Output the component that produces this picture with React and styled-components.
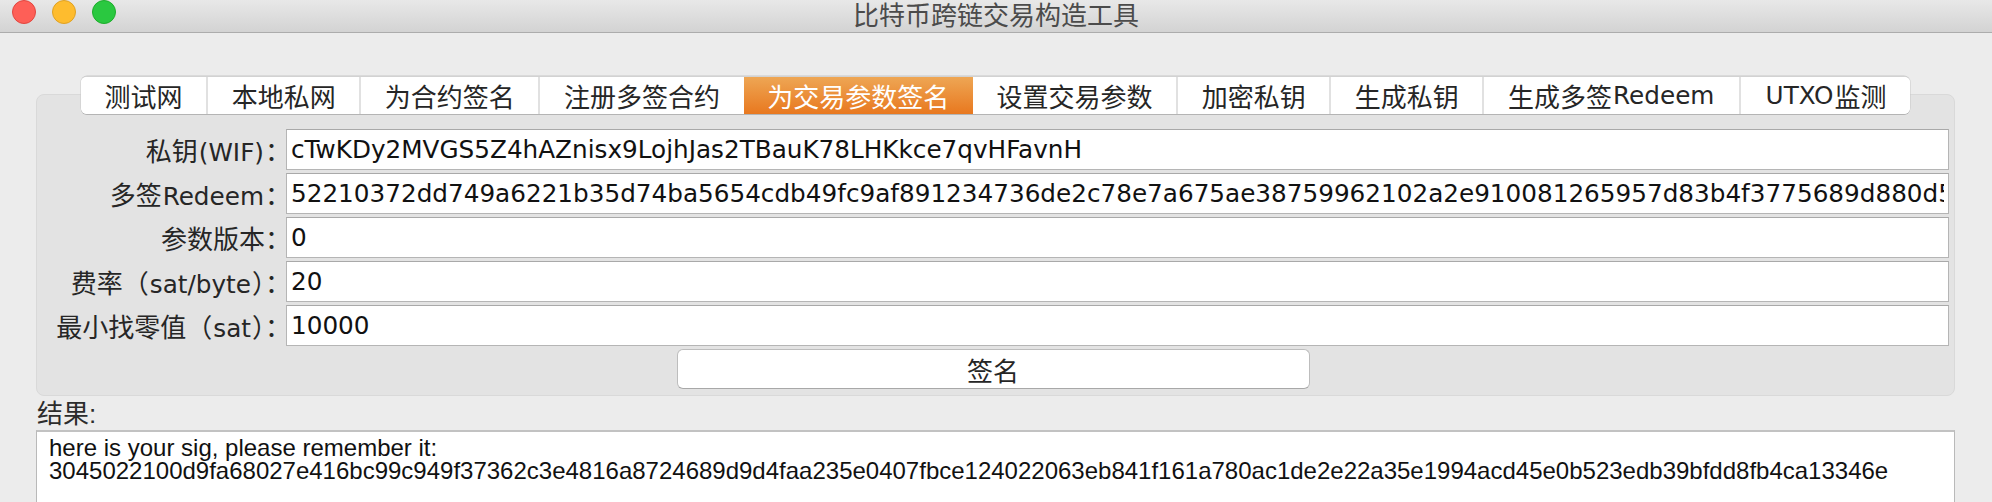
import React from 'react';
import styled, { createGlobalStyle } from 'styled-components';

const GlobalStyle = createGlobalStyle`
  html, body {
    margin: 0;
    padding: 0;
    background: #ececec;
    font-family: "Liberation Sans", "Noto Sans CJK SC", sans-serif;
  }
  * { box-sizing: border-box; }
`;

const Window = styled.div`
  width: 1992px;
  height: 502px;
  overflow: hidden;
  background: #ececec;
  display: flex;
  flex-direction: column;
`;

const TitleBar = styled.div`
  height: 33px;
  flex: none;
  display: grid;
  grid-template-columns: 1fr auto 1fr;
  align-items: start;
  background: linear-gradient(#e8e8e8, #d3d3d3);
  border-bottom: 1px solid #acacac;
`;

const Lights = styled.div`
  display: flex;
  gap: 16px;
  padding-left: 12px;
`;

const Light = styled.span`
  width: 24px;
  height: 24px;
  border-radius: 50%;
  background: ${p => p.$color};
  border: 1px solid ${p => p.$edge};
`;

const Title = styled.div`
  font-size: 26px;
  line-height: 27px;
  color: #4b4b4b;
  font-family: "Noto Sans CJK SC", sans-serif;
`;

const Content = styled.div`
  padding: 43px 37px 0 36px;
  display: flex;
  flex-direction: column;
`;

const TabRow = styled.div`
  display: flex;
  justify-content: center;
  position: relative;
  z-index: 1;
`;

const TabStrip = styled.div`
  display: flex;
  height: 38px;
  background: #fff;
  border-radius: 6px;
  border-top: 1px solid #d2d2d2;
  box-shadow: 0 1px 0 #b4b4b4, 0 0 0 0.5px #c8c8c8;
  overflow: hidden;
`;

const Tab = styled.div`
  display: flex;
  align-items: center;
  justify-content: center;
  padding: 0 23.6px;
  font-family: "Noto Sans CJK SC", sans-serif;
  font-size: 26px;
  color: ${p => (p.$active ? '#ffffff' : '#262626')};
  background: ${p => (p.$active ? 'linear-gradient(#eea654, #e8781f)' : '#ffffff')};
  border-left: ${p => (p.$first || p.$active || p.$afterActive ? 'none' : '2px solid #e1e1e1')};
  white-space: nowrap;
`;

const Latin = styled.span`
  font-family: "DejaVu Sans", sans-serif;
  font-size: 0.95em;
  margin: 0 1px;
`;

const Panel = styled.div`
  margin-top: -20px;
  background: #e3e3e3;
  border: 1px solid #d9d9d9;
  border-radius: 8px;
  padding: 34px 5px 6px 0;
  display: flex;
  flex-direction: column;
`;

const Form = styled.div`
  display: grid;
  grid-template-columns: 249px 1fr;
  row-gap: 3px;
`;

const Label = styled.label`
  font-family: "Noto Sans CJK SC", sans-serif;
  font-size: 26px;
  color: #262626;
  text-align: right;
  white-space: nowrap;
  align-self: center;
  margin-right: -5px;
`;

const Field = styled.input`
  height: 41px;
  width: 100%;
  border: 1px solid #b5b5b5;
  border-top-color: #a9a9a9;
  background: #fff;
  padding: 0 4px;
  font-family: "DejaVu Sans", sans-serif;
  font-size: 24.7px;
  color: #111;
  outline: none;
  position: relative;
`;

const SignButton = styled.button`
  width: 633px;
  height: 40px;
  margin: 3px auto 0;
  background: #fff;
  border: 1px solid #bdbdbd;
  border-bottom-color: #a8a8a8;
  border-radius: 6px;
  font-family: "Noto Sans CJK SC", sans-serif;
  font-size: 26px;
  color: #262626;
  padding: 0;
`;

const ResultLabel = styled.div`
  margin-top: 3px;
  font-size: 26px;
  line-height: 30px;
  color: #2c2c2c;
  padding-left: 1px;
`;

const ResultArea = styled.textarea`
  margin-top: 1px;
  height: 110px;
  width: 100%;
  resize: none;
  overflow: hidden;
  border: 1px solid #b9b9b9;
  border-top: 2px solid #c2c2c2;
  background: #fff;
  padding: 4px 12px;
  font-family: "Liberation Sans", sans-serif;
  font-size: 24px;
  line-height: 23px;
  color: #111;
  white-space: pre;
  outline: none;
`;

// Split a mixed CJK/Latin caption so that ASCII runs use the Latin face.
function Mixed({ text }) {
  return text
    .split(/([\x21-\x7e][\x20-\x7e]*)/)
    .filter(Boolean)
    .map((part, i) => (/^[\x21-\x7e]/.test(part) ? <Latin key={i}>{part}</Latin> : <React.Fragment key={i}>{part}</React.Fragment>));
}

const tabs = ['测试网', '本地私网', '为合约签名', '注册多签合约', '为交易参数签名', '设置交易参数', '加密私钥', '生成私钥', '生成多签Redeem', 'UTXO监测'];
const activeTab = 4;

const fields = [
  { label: '私钥(WIF)：', value: 'cTwKDy2MVGS5Z4hAZnisx9LojhJas2TBauK78LHKkce7qvHFavnH' },
  { label: '多签Redeem：', value: '52210372dd749a6221b35d74ba5654cdb49fc9af891234736de2c78e7a675ae38759962102a2e910081265957d83b4f3775689d880d52a8f1c3b7e0d9a44621036b1f2e4c8a9d7e3f5b0c1a2d4e6f8091a3b5c7d9e2f4a6b8c0d1e3f5a7b9c2d453ae' },
  { label: '参数版本：', value: '0' },
  { label: '费率（sat/byte）：', value: '20' },
  { label: '最小找零值（sat）：', value: '10000' },
];

const result = 'here is your sig, please remember it:\n3045022100d9fa68027e416bc99c949f37362c3e4816a8724689d9d4faa235e0407fbce124022063eb841f161a780ac1de2e22a35e1994acd45e0b523edb39bfdd8fb4ca13346e';

export default function App() {
  return (
    <>
      <GlobalStyle />
      <Window>
        <TitleBar>
          <Lights>
            <Light $color="#fe5f57" $edge="#e2463f" />
            <Light $color="#febc2e" $edge="#dfa123" />
            <Light $color="#2ac840" $edge="#1dad2b" />
          </Lights>
          <Title>比特币跨链交易构造工具</Title>
          <div />
        </TitleBar>
        <Content>
          <TabRow>
            <TabStrip>
              {tabs.map((t, i) => (
                <Tab key={t} $first={i === 0} $active={i === activeTab} $afterActive={i === activeTab + 1}>
                  <Mixed text={t} />
                </Tab>
              ))}
            </TabStrip>
          </TabRow>
          <Panel>
            <Form>
              {fields.map(f => (
                <React.Fragment key={f.label}>
                  <Label><Mixed text={f.label} /></Label>
                  <Field readOnly value={f.value} />
                </React.Fragment>
              ))}
            </Form>
            <SignButton>签名</SignButton>
          </Panel>
          <ResultLabel>结果:</ResultLabel>
          <ResultArea readOnly value={result} />
        </Content>
      </Window>
    </>
  );
}
